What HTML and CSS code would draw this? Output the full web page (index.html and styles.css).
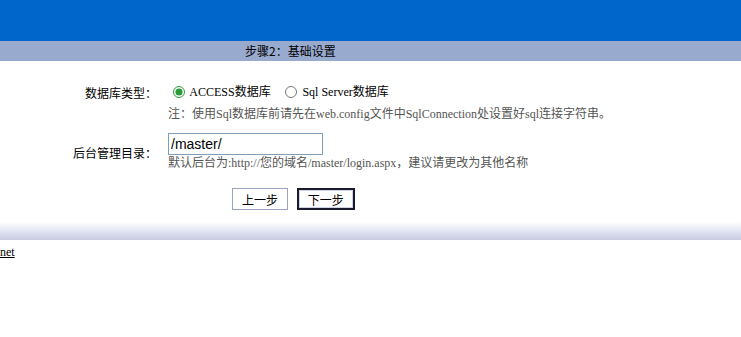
FILE: index.html
```html
<!DOCTYPE html>
<html lang="zh-CN">

<head>
    <meta charset="utf-8">
    <title>安装向导</title>
    <link rel="stylesheet" href="styles.css">
</head>

<body>
    <div class="top"></div>
    <div class="step">步骤2：基础设置</div>

    <form class="setup">
        <div class="row row-db">
            <div class="label">数据库类型：</div>
            <div class="field">
                <label class="opt"><input type="radio" name="db" checked> ACCESS数据库</label>
                <label class="opt"><input type="radio" name="db"> Sql Server数据库</label>
                <p class="tip">注：使用Sql数据库前请先在web.config文件中SqlConnection处设置好sql连接字符串。</p>
            </div>
        </div>
        <div class="row row-dir">
            <div class="label">后台管理目录：</div>
            <div class="field">
                <input class="txt" type="text" value="/master/">
                <p class="tip">默认后台为:http://您的域名/master/login.aspx，建议请更改为其他名称</p>
            </div>
        </div>
        <div class="buttons">
            <button type="button" class="btn">上一步</button>
            <button type="button" class="btn btn-next">下一步</button>
        </div>
    </form>

    <div class="bottom"></div>
    <a class="link" href="#">net</a>
</body>

</html>
```

FILE: styles.css
```css
body {
    margin: 0;
    font-family: "Noto Sans CJK SC", "Liberation Serif", serif;
    font-size: 12px;
    color: #000;
    background: #fff;
}

.top {
    height: 41px;
    background-color: #0066CC;
}

.step {
    height: 20px;
    line-height: 20px;
    background-color: #99AACF;
    padding-left: 245px;
    font-size: 12px;
}

.setup {
    margin: 0;
    padding-top: 21px;
}

.row {
    display: flex;
    align-items: flex-start;
}

.label {
    width: 157px;
    text-align: right;
    line-height: 20px;
    padding-top: 1px;
}

.field {
    padding-left: 11px;
}

.opt {
    font-family: "Liberation Serif", "Noto Sans CJK SC", serif;
    font-size: 12px;
    line-height: 20px;
    margin-right: 7px;
}

.opt input {
    margin: 0 2px 0 5px;
    width: 12px;
    height: 12px;
    vertical-align: -2px;
    accent-color: #2a9a3a;
}

.tip {
    margin: 0;
    color: #555;
    font-family: "Liberation Serif", "Noto Sans CJK SC", serif;
    font-size: 12px;
    line-height: 18px;
}

.row-db .tip {
    margin-top: 3px;
}

.row-dir {
    margin-top: 10px;
}

.row-dir .label {
    padding-top: 10px;
}

.txt {
    width: 155px;
    height: 22px;
    box-sizing: border-box;
    margin: 0;
    padding: 0 2px;
    border: 1px solid #7f9db9;
    font-family: "Liberation Sans", Arial, sans-serif;
    font-size: 14px;
    vertical-align: top;
}

.row-dir .tip {
    margin-top: -1px;
}

.buttons {
    padding: 16px 0 0 232px;
}

.btn {
    height: 22px;
    padding: 0 9px;
    margin-right: 6px;
    font-family: "Noto Sans CJK SC", sans-serif;
    font-size: 12px;
    background: #fff;
    border: 1px solid #9aa4c0;
    border-radius: 0;
}

.btn-next {
    border: 2px solid #1a1a2e;
    box-shadow: inset 0 0 0 1px #cfd3e6;
}

.bottom {
    height: 18px;
    margin-top: 12px;
    background: linear-gradient(#ffffff, #c6cbe2);
}

.link {
    display: inline-block;
    margin-top: 5px;
    color: #000;
    font-family: "Liberation Serif", serif;
    font-size: 12px;
}
```
